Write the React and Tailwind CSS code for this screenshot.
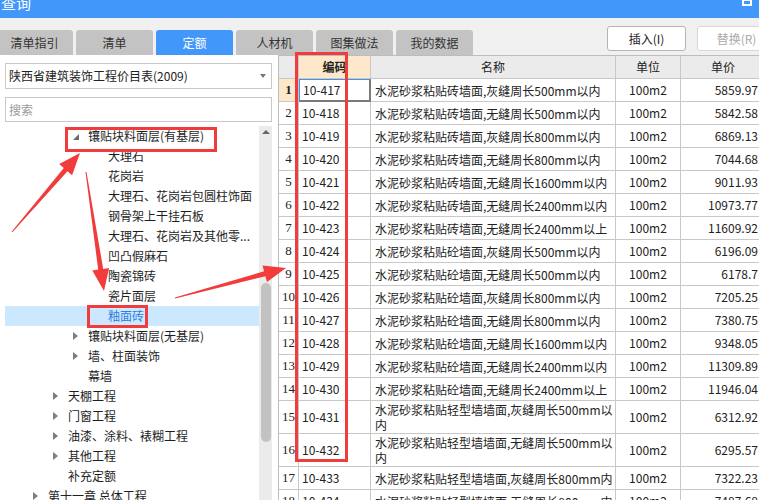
import React from 'react';

const tabs = ['清单指引', '清单', '定额', '人材机', '图集做法', '我的数据'];

const tree = [
  { l: 2, t: '镶贴块料面层(有基层)', tri: 'open' },
  { l: 3, t: '大理石' },
  { l: 3, t: '花岗岩' },
  { l: 3, t: '大理石、花岗岩包圆柱饰面' },
  { l: 3, t: '钢骨架上干挂石板' },
  { l: 3, t: '大理石、花岗岩及其他零...' },
  { l: 3, t: '凹凸假麻石' },
  { l: 3, t: '陶瓷锦砖' },
  { l: 3, t: '瓷片面层' },
  { l: 3, t: '釉面砖', sel: true },
  { l: 2, t: '镶贴块料面层(无基层)', tri: 'closed' },
  { l: 2, t: '墙、柱面装饰', tri: 'closed' },
  { l: 2, t: '幕墙' },
  { l: 1, t: '天棚工程', tri: 'closed' },
  { l: 1, t: '门窗工程', tri: 'closed' },
  { l: 1, t: '油漆、涂料、裱糊工程', tri: 'closed' },
  { l: 1, t: '其他工程', tri: 'closed' },
  { l: 1, t: '补充定额' },
  { l: 0, t: '第十一章 总体工程', tri: 'closed' },
];

const indent = { 0: 'pl-[28px]', 1: 'pl-[48px]', 2: 'pl-[68px]', 3: 'pl-[88px]' };

const rows = [
  ['10-417', '水泥砂浆粘贴砖墙面,灰缝周长500mm以内', '5859.97'],
  ['10-418', '水泥砂浆粘贴砖墙面,无缝周长500mm以内', '5842.58'],
  ['10-419', '水泥砂浆粘贴砖墙面,灰缝周长800mm以内', '6869.13'],
  ['10-420', '水泥砂浆粘贴砖墙面,无缝周长800mm以内', '7044.68'],
  ['10-421', '水泥砂浆粘贴砖墙面,无缝周长1600mm以内', '9011.93'],
  ['10-422', '水泥砂浆粘贴砖墙面,无缝周长2400mm以内', '10973.77'],
  ['10-423', '水泥砂浆粘贴砖墙面,无缝周长2400mm以上', '11609.92'],
  ['10-424', '水泥砂浆粘贴砼墙面,灰缝周长500mm以内', '6196.09'],
  ['10-425', '水泥砂浆粘贴砼墙面,无缝周长500mm以内', '6178.7'],
  ['10-426', '水泥砂浆粘贴砼墙面,灰缝周长800mm以内', '7205.25'],
  ['10-427', '水泥砂浆粘贴砼墙面,无缝周长800mm以内', '7380.75'],
  ['10-428', '水泥砂浆粘贴砼墙面,无缝周长1600mm以内', '9348.05'],
  ['10-429', '水泥砂浆粘贴砼墙面,无缝周长2400mm以内', '11309.89'],
  ['10-430', '水泥砂浆粘贴砼墙面,无缝周长2400mm以上', '11946.04'],
  ['10-431', ['水泥砂浆粘贴轻型墙墙面,灰缝周长500mm以', '内'], '6312.92'],
  ['10-432', ['水泥砂浆粘贴轻型墙墙面,无缝周长500mm以', '内'], '6295.57'],
  ['10-433', '水泥砂浆粘贴轻型墙墙面,灰缝周长800mm内', '7322.23'],
  ['10-434', '水泥砂浆粘贴轻型墙墙面,无缝周长800mm内', '7487.68'],
];

// tapered red arrow, tail -> tip
function arrowPoints(x1, y1, x2, y2) {
  const dx = x2 - x1, dy = y2 - y1;
  const len = Math.hypot(dx, dy);
  const ux = dx / len, uy = dy / len;
  const px = -uy, py = ux;
  const hl = 22, tw = 1, sw = 5, hw = 17;
  const bx = x2 - ux * hl, by = y2 - uy * hl;
  const p = (x, y, w) => `${(x + px * w).toFixed(1)},${(y + py * w).toFixed(1)}`;
  return [
    p(x1, y1, tw / 2), p(bx, by, sw / 2), p(bx, by, hw / 2), `${x2},${y2}`,
    p(bx, by, -hw / 2), p(bx, by, -sw / 2), p(x1, y1, -tw / 2),
  ].join(' ');
}

function TreeRow({ item }) {
  return (
    <div className={`h-[20px] flex items-center ${indent[item.l]} ${item.sel ? 'bg-[#cce8ff] text-[#2f7de0]' : 'text-[#1e1e1e]'}`}>
      <div className="w-[15px] flex items-center">
        {item.tri === 'closed' && <div className="w-0 h-0 border-y-[4px] border-y-transparent border-l-[5px] border-l-[#7d7d7d]" />}
        {item.tri === 'open' && <div className="w-0 h-0 border-b-[6px] border-b-[#6a6a6a] border-l-[6px] border-l-transparent mt-[2px]" />}
      </div>
      <span className="whitespace-nowrap">{item.t}</span>
    </div>
  );
}

export default function App() {
  return (
    <div className="relative w-[759px] h-[500px] overflow-hidden bg-[#f0f0f0] font-['Noto_Sans_CJK_SC','Noto_Sans',sans-serif] text-[12px] text-[#222]">
      {/* title bar */}
      <div className="h-[18px] bg-[#4297fb] flex items-start justify-between overflow-hidden">
        <span className="text-white text-[15px] leading-[18px] -mt-[6px] pl-[1px]">查询</span>
        <div className="w-[10px] h-[7px] border-2 border-white -mt-[1px] mr-[7px]" />
      </div>

      {/* tabs + buttons */}
      <div className="h-[37px] flex justify-between">
        <div className="flex gap-[3px] items-end -ml-[4px]">
          {tabs.map((t) => (
            <div
              key={t}
              className={`w-[77px] h-[25px] rounded-t-[3px] flex items-center justify-center ${t === '定额' ? 'bg-[#4297fb] text-white' : 'bg-[#c3c3c3] text-[#333]'}`}
            >
              {t}
            </div>
          ))}
        </div>
        <div className="flex gap-[11px] pt-[8px] -mr-[17px]">
          <button className="w-[79px] h-[25px] bg-white border border-[#b5b5b5] rounded-[3px] text-[#222]">插入(I)</button>
          <button className="w-[79px] h-[25px] bg-white border border-[#d8d8d8] rounded-[3px] text-[#aaa]">替换(R)</button>
        </div>
      </div>

      <div className="flex h-[445px]">
        {/* left panel */}
        <div className="w-[278px] shrink-0 bg-white pl-[5px] pt-[8px] flex flex-col">
          <div className="w-[267px] h-[26px] border border-[#c8c8c8] flex items-center justify-between pl-[3px] pr-[5px]">
            <span>陕西省建筑装饰工程价目表(2009)</span>
            <div className="w-0 h-0 border-x-[3px] border-x-transparent border-t-[4px] border-t-[#777]" />
          </div>
          <div className="w-[267px] h-[25px] mt-[8px] border border-[#c8c8c8] flex items-center pl-[3px] text-[#9a9a9a]">搜索</div>
          <div className="mt-[4px] flex flex-1 w-[267px] overflow-hidden">
            <div className="w-[254px]">
              {tree.map((item, i) => (
                <TreeRow key={i} item={item} />
              ))}
            </div>
            <div className="w-[13px] bg-[#ebebeb] flex flex-col items-center">
              <div className="mt-[4px] w-0 h-0 border-x-[4px] border-x-transparent border-b-[4px] border-b-[#666]" />
              <div className="mt-[149px] w-[10px] h-[159px] rounded-full bg-[#c2c2c2]" />
            </div>
          </div>
        </div>

        {/* table */}
        <div className="w-[487px] shrink-0 bg-white border-t border-l border-[#bdbdbd]">
          <div className="flex h-[23px] bg-[#ebebeb] border-b border-[#c8c8c8]">
            <div className="w-[20px] border-r border-[#c8c8c8]" />
            <div className="w-[72px] border-r border-[#c8c8c8] bg-[#fde8cc] flex items-center justify-center font-bold">编码</div>
            <div className="w-[245px] border-r border-[#c8c8c8] flex items-center justify-center">名称</div>
            <div className="w-[65px] border-r border-[#c8c8c8] flex items-center justify-center">单位</div>
            <div className="w-[84px] flex items-center justify-center">单价</div>
          </div>
          {rows.map(([code, name, price], i) => {
            const tall = Array.isArray(name);
            const first = i === 0;
            return (
              <div key={code} className={`flex border-b border-[#c8c8c8] ${tall ? 'h-[33px]' : 'h-[23px]'}`}>
                <div className={`w-[20px] border-r border-[#c8c8c8] flex items-center justify-center font-['Liberation_Serif',serif] text-[13px] ${first ? 'bg-[#fde8cc] font-bold' : ''}`}>
                  {i + 1}
                </div>
                <div className={`w-[72px] flex items-center pl-[3px] ${first ? 'border-l border-t border-[#4a90e2] border-r-2 border-r-[#7a7a7a] border-b-2 border-b-[#7a7a7a] -mb-[1px]' : 'border-r border-[#c8c8c8]'}`}>
                  {code}
                </div>
                <div className="w-[245px] border-r border-[#c8c8c8] flex flex-col justify-center pl-[4px] leading-[15px] whitespace-nowrap overflow-hidden">
                  {tall ? name.map((n) => <span key={n}>{n}</span>) : <span>{name}</span>}
                </div>
                <div className="w-[65px] border-r border-[#c8c8c8] flex items-center justify-center">100m2</div>
                <div className="w-[84px] flex items-center justify-end pr-[7px]">{price}</div>
              </div>
            );
          })}
        </div>
      </div>

      {/* annotations */}
      <div className="absolute left-[65px] top-[127px] w-[152px] h-[25px] border-[3px] border-[#f03c3c]" />
      <div className="absolute left-[87px] top-[305px] w-[61px] h-[23px] border-[3px] border-[#f03c3c]" />
      <div className="absolute left-[295px] top-[52px] w-[53px] h-[410px] border-[3px] border-[#f03c3c]" />
      <svg className="absolute left-0 top-0 pointer-events-none" width="759" height="500">
        <polygon points={arrowPoints(12, 232, 80, 153)} fill="#f23c3c" />
        <polygon points={arrowPoints(86, 172, 104, 291)} fill="#f23c3c" />
        <polygon points={arrowPoints(175, 298, 286, 268)} fill="#f23c3c" />
      </svg>
    </div>
  );
}
